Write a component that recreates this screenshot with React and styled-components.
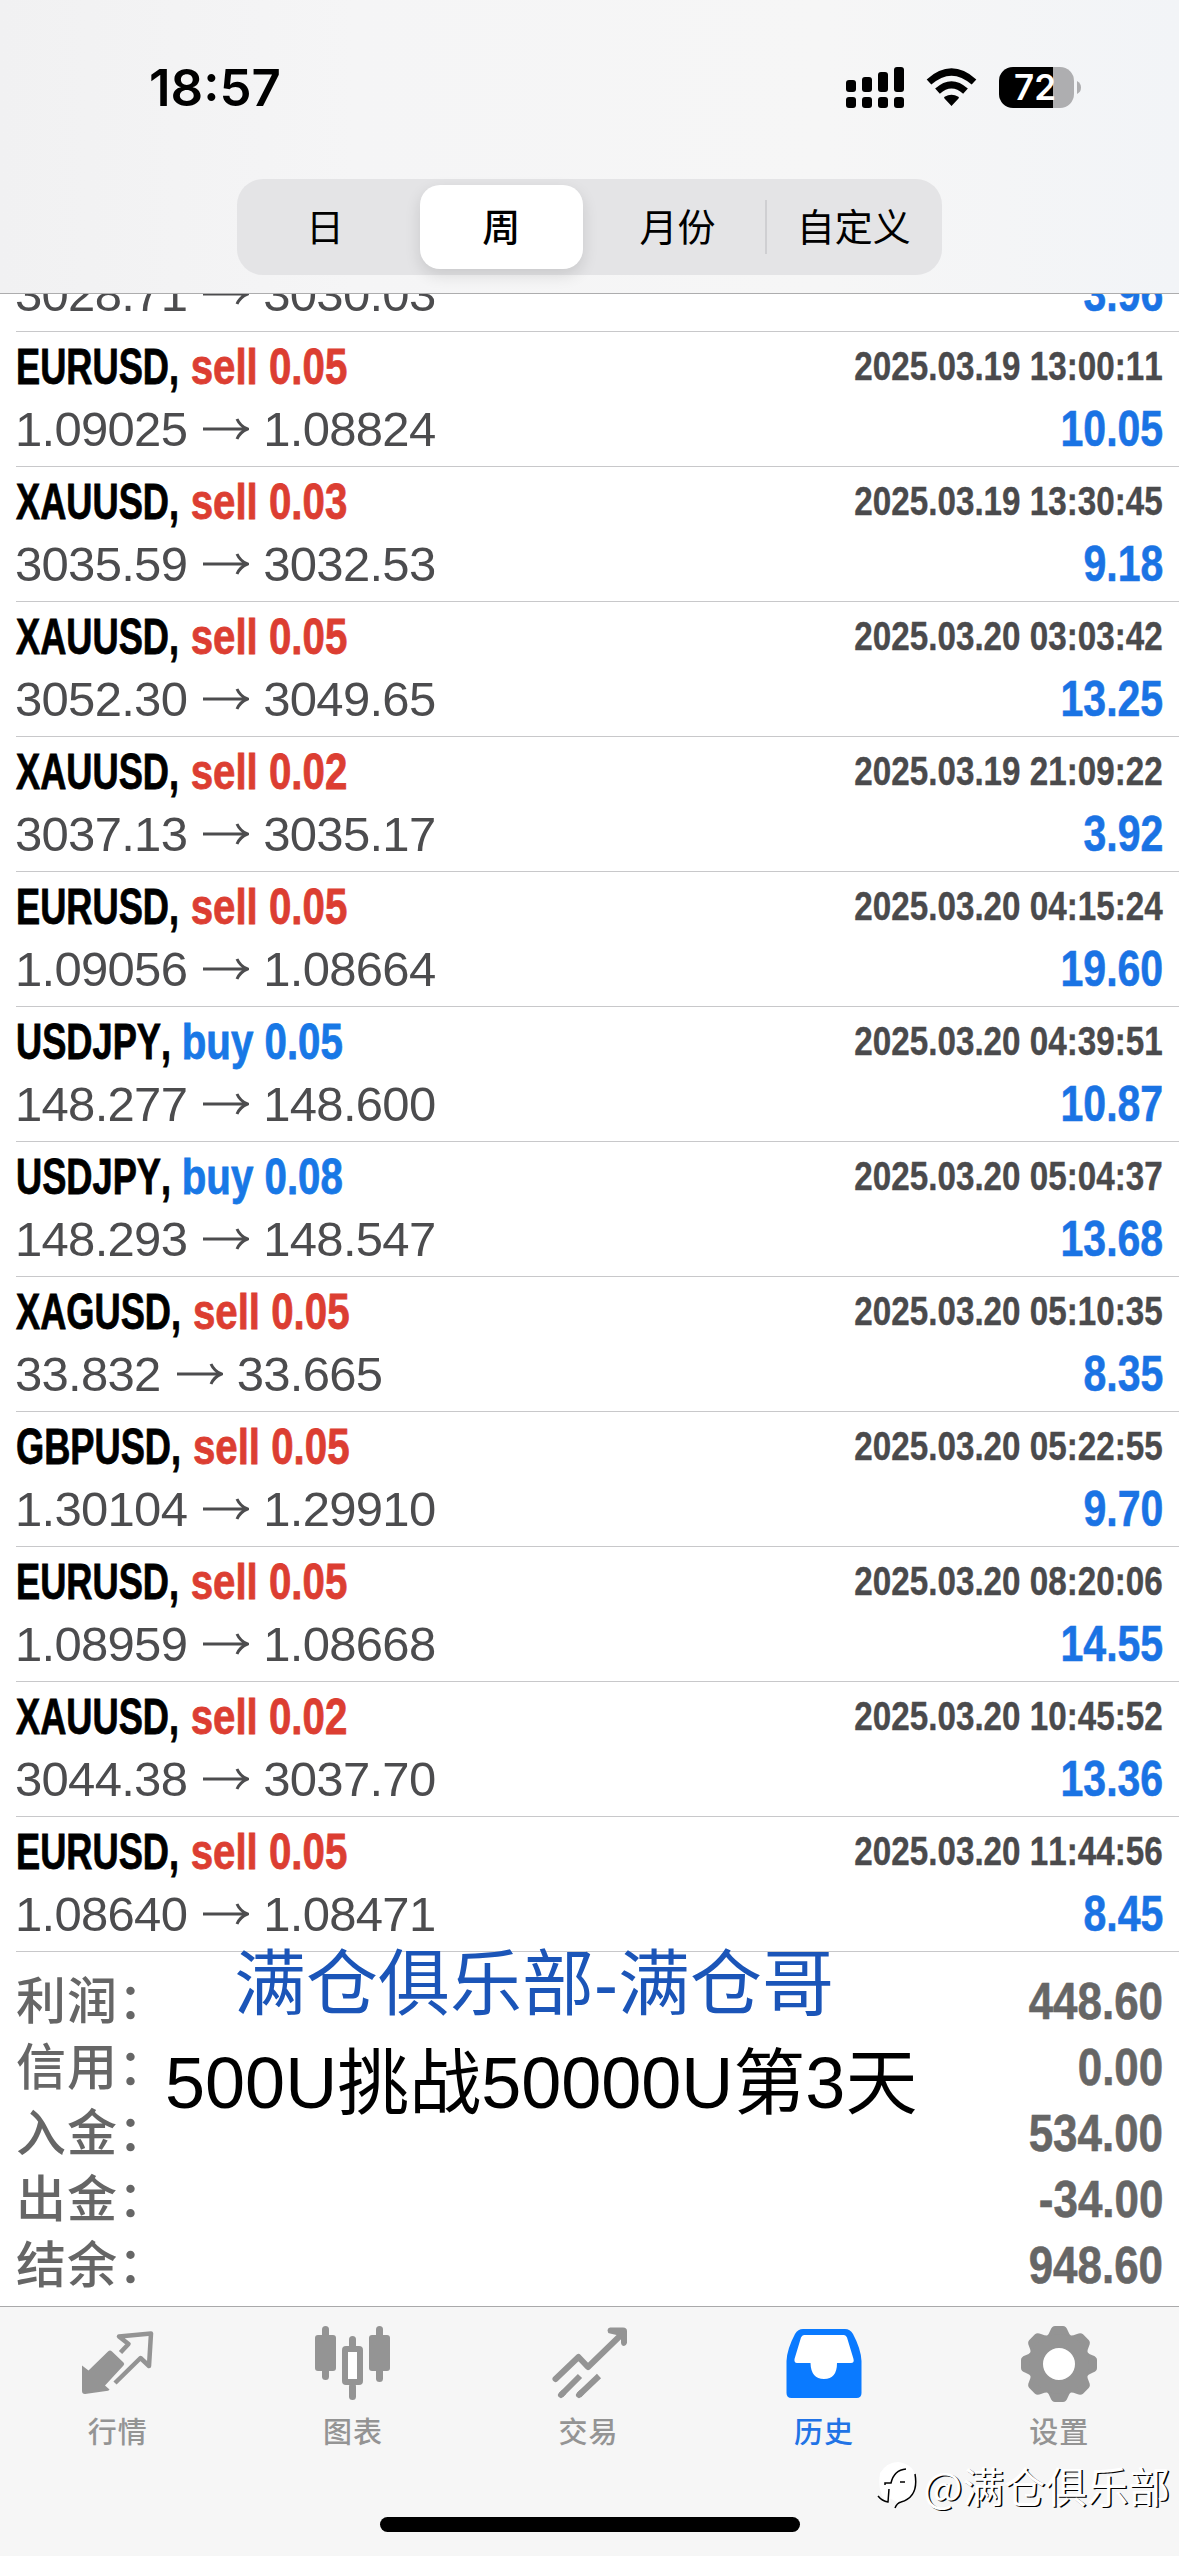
import React, {useState} from "react";
import styled, {createGlobalStyle} from "styled-components";

const GlobalStyle = createGlobalStyle`
    * {
        box-sizing: border-box;
    }

    body {
        margin: 0;
        background: #fff;
        font-family: "Liberation Sans", "Noto Sans CJK SC", sans-serif;
    }
`;

const Screen = styled.div`
    position: relative;
    display: flex;
    flex-direction: column;
    width: 1179px;
    height: 2556px;
    overflow: hidden;
    background: #fff;
`;

const Header = styled.header`
    flex: none;
    height: 294px;
    background: linear-gradient(90deg, #f1f1f2 0%, #f5f5f6 30%, #f6f6f6 70%, #f2f4f7 100%);
    border-bottom: 1px solid #adadae;
`;

const StatusBar = styled.div`
    display: flex;
    justify-content: space-between;
    align-items: center;
    height: 176px;
    margin-bottom: 3px;
    padding: 0 97px 0 149px;
`;

const Clock = styled.span`
    font-family: Inter, sans-serif;
    font-size: 51px;
    font-weight: 600;
    line-height: 60px;
    letter-spacing: 0;
    color: #000;
`;

const Segmented = styled.div`
    display: flex;
    width: 705px;
    height: 96px;
    margin: 0 auto;
    padding: 6px 0;
    border-radius: 26px;
    background: #e4e4e6;
`;

const Segment = styled.button`
    flex: 1;
    margin: 0 7px;
    padding: 0 0 5px;
    border: 0;
    border-radius: 20px;
    background: ${(p) => (p.$active ? "#fff" : "transparent")};
    box-shadow: ${(p) => (p.$active ? "0 6px 16px rgba(0, 0, 0, 0.12)" : "none")};
    font-family: "Noto Sans CJK SC", sans-serif;
    font-size: 38px;
    font-weight: ${(p) => (p.$active ? 500 : 400)};
    white-space: nowrap;
    color: #000;
`;

const SegmentDivider = styled.i`
    width: 2px;
    height: 54px;
    margin: 15px -1px;
    background: #cfcfd2;
`;

const Deals = styled.section`
    flex: none;
    display: flex;
    flex-direction: column;
    justify-content: flex-end;
    height: 1658px;
    overflow: hidden;
    padding-left: 16px;
`;

const DealRow = styled.div`
    flex: none;
    display: flex;
    flex-direction: column;
    height: ${(p) => (p.$clipped ? 38 : 135)}px;
    padding: ${(p) => (p.$clipped ? 0 : 3)}px 16px 0 0;
    border-bottom: 1px solid #c8c8ca;
    ${(p) => p.$clipped && "justify-content: flex-end; padding-bottom: 5px;"}
`;

const Line = styled.div`
    flex: none;
    display: flex;
    justify-content: space-between;
    align-items: baseline;
    height: ${(p) => p.$height}px;
    line-height: 64px;
    white-space: nowrap;
`;

/* bold text squeezed to a condensed width */
const Condensed = styled.span`
    display: inline-block;
    font-weight: 700;
    font-kerning: none;
    transform: scaleX(0.82);
    transform-origin: right;
`;

const Title = styled(Condensed)`
    font-size: 50px;
    transform: scaleX(0.805);
    transform-origin: left;
    -webkit-text-stroke: 0.8px;
    color: #000;
`;

const Symbol = styled.span`
    display: inline-block;
    margin-right: -22px;
    transform: scaleX(0.9);
    transform-origin: left;
`;

const Side = styled.span`
    color: ${(p) => (p.$side === "buy" ? "#1878e6" : "#dc3e32")};
`;

const Time = styled(Condensed)`
    font-size: 41px;
    transform: translateY(-4px) scaleX(0.81);
    -webkit-text-stroke: 0.4px;
    color: #4a4a4c;
`;

const Prices = styled.span`
    display: flex;
    align-items: baseline;
    margin-left: -1px;
    font-size: 49px;
    letter-spacing: -0.7px;
    color: #4c4c4e;
`;

const ArrowIcon = styled.svg`
    width: 46px;
    height: 24px;
    margin: 0 14px 0 16px;
    transform: translateY(-5px);
`;

const Profit = styled(Condensed)`
    font-size: 50px;
    -webkit-text-stroke: 0.6px;
    color: #1a73e4;
`;

const Summary = styled.section`
    position: relative;
    flex: none;
    height: 354px;
    padding: 12px 16px 0;
`;

const SummaryRow = styled.div`
    display: flex;
    justify-content: space-between;
    align-items: baseline;
    height: 66px;
    line-height: 66px;
    color: #666;
`;

const SummaryLabel = styled.span`
    font-family: "Noto Sans CJK SC", sans-serif;
    font-size: 50px;
    font-weight: 500;
    letter-spacing: 1px;
`;

const SummaryValue = styled(Condensed)`
    font-size: 52px;
    transform: scaleX(0.845);
    -webkit-text-stroke: 0.6px;
`;

/* captions written over the summary */
const Caption = styled.div`
    position: absolute;
    left: ${(p) => p.$left}px;
    top: ${(p) => p.$top}px;
    font-size: 72px;
    line-height: 100px;
    white-space: nowrap;
    color: ${(p) => p.$color};
`;

const TabBar = styled.nav`
    flex: none;
    display: flex;
    height: 250px;
    padding-right: 2px;
    border-top: 1px solid #a9a9aa;
    background: #f6f6f6;
`;

const Tab = styled.button`
    flex: 1;
    display: flex;
    flex-direction: column;
    align-items: center;
    padding: 20px 0 0;
    border: 0;
    background: none;
    font-family: "Noto Sans CJK SC", sans-serif;
    font-size: 29px;
    font-weight: 500;
    line-height: 40px;
    letter-spacing: 1px;
    color: ${(p) => (p.$active ? "#2173e6" : "#949494")};

    svg {
        width: 80px;
        height: 80px;
        margin-bottom: 3px;
        color: ${(p) => (p.$active ? "#0a7aff" : "#949494")};
    }
`;

const HomeIndicator = styled.div`
    position: absolute;
    left: 380px;
    bottom: 24px;
    width: 420px;
    height: 15px;
    border-radius: 8px;
    background: #000;
`;

const Watermark = styled.div`
    position: absolute;
    right: 9px;
    bottom: 41px;
    display: flex;
    align-items: center;
    gap: 4px;
    font-family: "Noto Sans CJK SC", sans-serif;
    font-size: 41.5px;
    line-height: 60px;
    color: #fff;
    text-shadow: 1.5px 1px 0 #000;
    white-space: nowrap;
`;

const deals = [
    {open: "3028.71", close: "3030.03", profit: "3.96"},
    {symbol: "EURUSD", side: "sell", volume: "0.05", time: "2025.03.19 13:00:11", open: "1.09025", close: "1.08824", profit: "10.05"},
    {symbol: "XAUUSD", side: "sell", volume: "0.03", time: "2025.03.19 13:30:45", open: "3035.59", close: "3032.53", profit: "9.18"},
    {symbol: "XAUUSD", side: "sell", volume: "0.05", time: "2025.03.20 03:03:42", open: "3052.30", close: "3049.65", profit: "13.25"},
    {symbol: "XAUUSD", side: "sell", volume: "0.02", time: "2025.03.19 21:09:22", open: "3037.13", close: "3035.17", profit: "3.92"},
    {symbol: "EURUSD", side: "sell", volume: "0.05", time: "2025.03.20 04:15:24", open: "1.09056", close: "1.08664", profit: "19.60"},
    {symbol: "USDJPY", side: "buy", volume: "0.05", time: "2025.03.20 04:39:51", open: "148.277", close: "148.600", profit: "10.87"},
    {symbol: "USDJPY", side: "buy", volume: "0.08", time: "2025.03.20 05:04:37", open: "148.293", close: "148.547", profit: "13.68"},
    {symbol: "XAGUSD", side: "sell", volume: "0.05", time: "2025.03.20 05:10:35", open: "33.832", close: "33.665", profit: "8.35"},
    {symbol: "GBPUSD", side: "sell", volume: "0.05", time: "2025.03.20 05:22:55", open: "1.30104", close: "1.29910", profit: "9.70"},
    {symbol: "EURUSD", side: "sell", volume: "0.05", time: "2025.03.20 08:20:06", open: "1.08959", close: "1.08668", profit: "14.55"},
    {symbol: "XAUUSD", side: "sell", volume: "0.02", time: "2025.03.20 10:45:52", open: "3044.38", close: "3037.70", profit: "13.36"},
    {symbol: "EURUSD", side: "sell", volume: "0.05", time: "2025.03.20 11:44:56", open: "1.08640", close: "1.08471", profit: "8.45"},
];

const totals = [
    ["利润", "448.60"],
    ["信用", "0.00"],
    ["入金", "534.00"],
    ["出金", "-34.00"],
    ["结余", "948.60"],
];

const StatusIcons = () => (
    <svg width="236" height="42" viewBox="0 0 236 42">
        <g fill="#000">
            <rect x="0" y="13" width="10" height="12" rx="3" />
            <rect x="16" y="10" width="10" height="15" rx="3" />
            <rect x="32" y="5" width="10" height="20" rx="3" />
            <rect x="48" y="0" width="10" height="25" rx="3" />
            <rect x="0" y="30" width="10" height="11" rx="3" />
            <rect x="16" y="30" width="10" height="11" rx="3" />
            <rect x="32" y="30" width="10" height="11" rx="3" />
            <rect x="48" y="30" width="10" height="11" rx="3" />
            <path d="M105.500 39 L98.500 31.500 Q97.500 30.500 98.600 29.800 Q105.500 25.800 112.400 29.800 Q113.500 30.500 112.500 31.500Z" />
        </g>
        <g fill="none" stroke="#000" strokeWidth="7">
            <path d="M83 15 Q105.500 -5 128 15" />
            <path d="M91.500 24.200 Q105.500 11.500 119.500 24.200" />
        </g>
        <path d="M153 14 a14 14 0 0 1 14 -14 h40 v41 h-40 a14 14 0 0 1 -14 -14z" fill="#000" />
        <path d="M207 0 h7 a14 14 0 0 1 14 14 v13 a14 14 0 0 1 -14 14 h-7z" fill="#aeaeb0" />
        <path d="M231 14 q4 2 4 6.500 t-4 6.500z" fill="#aeaeb0" />
        <text x="189" y="33" textAnchor="middle" fontFamily="Inter, sans-serif" fontWeight="600" fontSize="35" fill="#fff">
            72
        </text>
    </svg>
);

const Arrow = () => (
    <ArrowIcon viewBox="0 0 46 24" fill="none" stroke="#4c4c4e" strokeWidth="3">
        <path d="M0 12H44M34 2Q37 9 44.500 12Q37 15 34 22" />
    </ArrowIcon>
);

const QuotesIcon = () => (
    <svg viewBox="0 0 80 80">
        <path
            d="M4 38.500L10.500 43.500L30 24.500Q32 22.500 34 24.500L45.500 35.500Q47 37 45.500 38.500L27 58.500L31.500 62.500Q31 63.500 30 63.800L7 67Q4 67 4 64Z"
            fill="currentColor"
        />
        <path
            d="M42.500 25.500L50.500 17L41 9.500L73 6.500L71 39L62.500 31L37 56"
            fill="none"
            stroke="currentColor"
            strokeWidth="4.500"
            strokeLinejoin="round"
        />
    </svg>
);

const ChartIcon = () => (
    <svg viewBox="0 0 80 80" overflow="visible">
        <g fill="currentColor">
            <rect x="2" y="8" width="21" height="36" rx="3" />
            <rect x="9" y="-1" width="7" height="54" rx="3.500" />
            <rect x="56" y="8" width="21" height="36" rx="3" />
            <rect x="63" y="-1" width="7" height="56" rx="3.500" />
            <rect x="36" y="9" width="7" height="14" rx="3.500" />
            <rect x="36" y="56" width="7" height="17" rx="3.500" />
        </g>
        <rect x="32" y="22" width="15" height="33" rx="1" fill="#fff" stroke="currentColor" strokeWidth="6" />
    </svg>
);

const TradeIcon = () => (
    <svg viewBox="0 0 80 80" fill="none" stroke="currentColor" strokeWidth="6">
        <path d="M6.500 52L29.500 30L39 40L73 7" strokeLinecap="round" strokeLinejoin="round" />
        <path d="M61 0.500H74Q78 0.500 78 4V16Q77 19 75 19Q72.500 19 72 16V9L61 6.500Q58.500 6 58.500 3.500T61 0.500Z" fill="currentColor" stroke="none" />
        <path d="M12 68L31 49M30 68L50 49" />
        <path d="M12 68L14 66M30 68L32 66" strokeLinecap="round" />
    </svg>
);

const HistoryIcon = () => (
    <svg viewBox="0 0 80 80">
        <path
            fill="#fff"
            d="M16 6H64L72 38H56Q54 54 40 54T24 38H8Z"
        />
        <path
            fillRule="evenodd"
            fill="currentColor"
            d="M19 2H61Q66 2 69 7Q77 22 77.500 34V66Q77.500 71 72.500 71H7.500Q2.500 71 2.500 66V34Q3 22 11 7Q14 2 19 2ZM20 8Q18 8 17 10.500L10.500 32Q10 36 13 36H26.500Q27 52 40 52T53 36H67Q70.500 36 69.500 32L63 10.500Q62 8 60 8Z"
        />
    </svg>
);

// eight rounded teeth around a ring
const SettingsIcon = () => (
    <svg viewBox="-40 -37 80 80" overflow="visible" fill="currentColor">
        {[0, 45, 90, 135, 180, 225, 270, 315].map((angle) => (
            <path key={angle} transform={`rotate(${angle})`} d="M-14 -26Q-9.500 -30 -8.500 -34Q-7 -38 -4 -38H4Q7 -38 8.500 -34Q9.500 -30 14 -26Z" />
        ))}
        <circle r="23" fill="#fff" stroke="currentColor" strokeWidth="14" />
    </svg>
);

const tabs = [
    {id: "quotes", label: "行情", Icon: QuotesIcon},
    {id: "chart", label: "图表", Icon: ChartIcon},
    {id: "trade", label: "交易", Icon: TradeIcon},
    {id: "history", label: "历史", Icon: HistoryIcon},
    {id: "settings", label: "设置", Icon: SettingsIcon},
];

// a deal without a symbol is the one scrolled half under the header
const Deal = ({deal}) => (
    <DealRow $clipped={!deal.symbol}>
        {deal.symbol && (
            <Line $height={62}>
                <Title>
                    <Symbol>{deal.symbol},</Symbol>{" "}
                    <Side $side={deal.side}>
                        {deal.side} {deal.volume}
                    </Side>
                </Title>
                <Time>{deal.time}</Time>
            </Line>
        )}
        <Line $height={64}>
            <Prices>
                {deal.open}
                <Arrow />
                {deal.close}
            </Prices>
            <Profit>{deal.profit}</Profit>
        </Line>
    </DealRow>
);

const App = () => {
    const [period, setPeriod] = useState("周");
    const [tab, setTab] = useState("history");

    return (
        <Screen>
            <GlobalStyle />
            <Header>
                <StatusBar>
                    <Clock>18:57</Clock>
                    <StatusIcons />
                </StatusBar>
                <Segmented>
                    {["日", "周", "月份", "自定义"].map((name) => (
                        <React.Fragment key={name}>
                            {name === "自定义" && <SegmentDivider />}
                            <Segment $active={period === name} onClick={() => setPeriod(name)}>
                                {name}
                            </Segment>
                        </React.Fragment>
                    ))}
                </Segmented>
            </Header>
            <Deals>
                {deals.map((deal) => (
                    <Deal key={deal.open} deal={deal} />
                ))}
            </Deals>
            <Summary>
                {totals.map(([label, value]) => (
                    <SummaryRow key={label}>
                        <SummaryLabel>{label}：</SummaryLabel>
                        <SummaryValue>{value}</SummaryValue>
                    </SummaryRow>
                ))}
                <Caption $left={234} $top={-18} $color="#1b55b8">
                    满仓俱乐部-满仓哥
                </Caption>
                <Caption $left={165} $top={81} $color="#000">
                    500U挑战50000U第3天
                </Caption>
            </Summary>
            <TabBar>
                {tabs.map(({id, label, Icon}) => (
                    <Tab key={id} $active={tab === id} onClick={() => setTab(id)}>
                        <Icon />
                        {label}
                    </Tab>
                ))}
            </TabBar>
            <HomeIndicator />
            <Watermark>
                <svg width="42" height="48" viewBox="0 0 42 48">
                    <path d="M3 12Q10 1 21 1Q38 3 39 19Q39 36 25 41L18 47L20 41L12 37L10 41Q0 32 3 12Z" fill="#fff" />
                    <path
                        d="M38 13Q42 36 24 41Q20 42 18 47M1 35Q5 40 11 41L12 28M8 24V22H14Q17 9 29 8M23 21H28"
                        fill="none"
                        stroke="#000"
                        strokeWidth="1.500"
                    />
                </svg>
                @满仓俱乐部
            </Watermark>
        </Screen>
    );
};

export default App;
